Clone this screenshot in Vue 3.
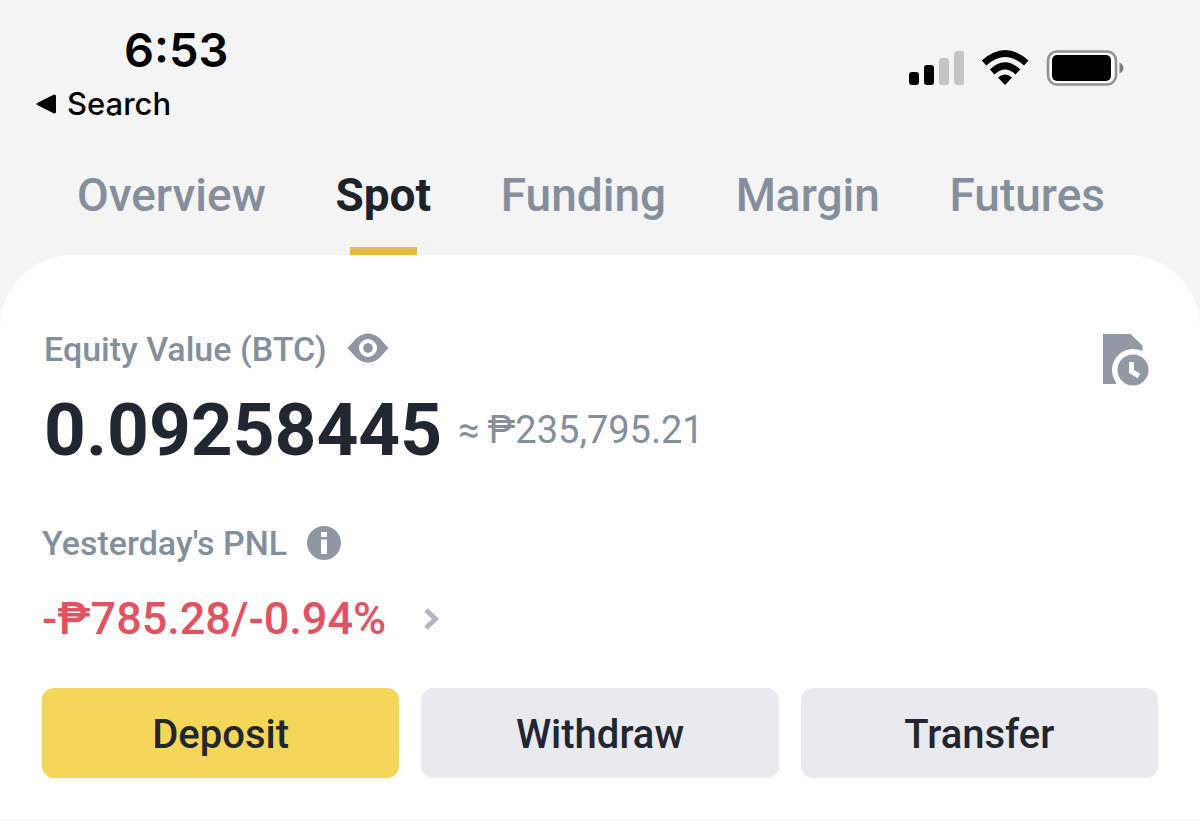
<script setup>
import { ref } from 'vue'

const tabs = ['Overview', 'Spot', 'Funding', 'Margin', 'Futures']
const active = ref('Spot')
const actions = ['Deposit', 'Withdraw', 'Transfer']
</script>

<template>
  <div class="wallet">
    <header class="status">
      <div class="status-left">
        <div class="time">6:53</div>
        <a class="back" href="#">
          <svg width="20" height="20" viewBox="0 0 20 20" aria-hidden="true">
            <path d="M1.2 9 17.5.8Q20 0 20 2.5v15q0 2.500-2.500 1.700L1.200 11Q-.4 10 1.200 9z" fill="#000" />
          </svg>
          <span>Search</span>
        </a>
      </div>
      <div class="indicators">
        <svg width="56" height="36" viewBox="0 0 56 36" role="img" aria-label="Signal">
          <rect x="1" y="22" width="10" height="13" rx="3" />
          <rect x="16" y="15" width="10" height="20" rx="3" />
          <rect x="31" y="8" width="10" height="27" rx="3" fill="#c4c4c4" />
          <rect x="46" y="1" width="10" height="34" rx="3" fill="#c4c4c4" />
        </svg>
        <svg width="48" height="36" viewBox="0 0 48 36" role="img" aria-label="Wi-Fi">
          <path d="M.800 10.500Q24-10.500 47.500 10.500L43 15.500Q24-1.500 5.300 15.500z" />
          <path d="M8.800 19.500Q24 5 39.200 19.500L34.500 24.500Q24 14.500 13.500 24.500z" />
          <path d="M17 27.500Q24 21.500 31 27.500L24 35z" />
        </svg>
        <svg width="78" height="36" viewBox="0 0 78 36" role="img" aria-label="Battery">
          <rect x="2" y="1.500" width="68" height="33" rx="9" fill="#fbfbfb" stroke="#919191" stroke-width="2.600" />
          <rect x="6" y="5" width="59" height="26" rx="5" />
          <path d="M73.500 12.500q4 2 4 5.500t-4 5.500z" fill="#7d7d7d" />
        </svg>
      </div>
    </header>

    <nav class="tabs">
      <button
        v-for="tab in tabs"
        :key="tab"
        class="tab"
        :class="{ active: tab === active }"
        @click="active = tab"
      >{{ tab }}</button>
    </nav>

    <main class="panel">
      <div class="top">
        <section>
          <div class="label">
            <span>Equity Value (BTC)</span>
            <button class="icon" aria-label="Hide balance">
              <svg width="42" height="32" viewBox="0 0 42 32">
                <path fill-rule="evenodd" fill="#9097a3" d="M.500 15 9.500 5Q21-4 32.500 5L41.500 15 32.500 25Q21 34 9.500 25zM21 6a9 9 0 1 0 0 18 9 9 0 0 0 0-18z" />
                <circle cx="21" cy="15" r="4.800" fill="#9097a3" />
              </svg>
            </button>
          </div>
          <div class="balance">
            <strong>0.09258445</strong>
            <span class="fiat"><span class="approx">≈</span>₱235,795.21</span>
          </div>
        </section>
        <button class="icon" aria-label="Order history">
          <svg width="48" height="54" viewBox="0 0 48 54">
            <path d="M1 1H28.500L40.500 12.500V32H14V51H1z" fill="#9199a5" />
            <circle cx="31" cy="37" r="21" fill="#fefefe" />
            <circle cx="31" cy="37" r="15.500" fill="#9199a5" />
            <path d="M29.500 29V38.500L37 43" fill="none" stroke="#fefefe" stroke-width="5" />
          </svg>
        </button>
      </div>

      <section class="pnl">
        <div class="label">
          <span>Yesterday's PNL</span>
          <button class="icon" aria-label="About PNL">
            <svg width="34" height="34" viewBox="0 0 34 34">
              <circle cx="17" cy="17" r="17" fill="#9097a3" />
              <path d="M14 6h6v5h-6zM14 13.500h6V28h-6z" fill="#fefefe" />
            </svg>
          </button>
        </div>
        <a class="change" href="#">
          <span>-₱785.28/-0.94%</span>
          <svg width="16" height="22" viewBox="0 0 16 22" aria-hidden="true">
            <path d="M2 2 11.500 11 2 20" fill="none" stroke="#b3b6bd" stroke-width="5" />
          </svg>
        </a>
      </section>

      <div class="actions">
        <button
          v-for="(action, i) in actions"
          :key="action"
          class="action"
          :class="{ primary: i === 0 }"
        >{{ action }}</button>
      </div>
    </main>
  </div>
</template>

<style>
body {
  margin: 0;
  background: #fefefe;
}
</style>

<style scoped>
.wallet {
  background: #f4f4f4;
  font-family: Roboto, "Liberation Sans", sans-serif;
  color: #222630;
}
button {
  padding: 0;
  border: 0;
  background: none;
  font: inherit;
  color: inherit;
  cursor: pointer;
}
a {
  color: inherit;
  text-decoration: none;
}
svg {
  display: block;
  flex: none;
}
.status {
  display: flex;
  justify-content: space-between;
  align-items: flex-start;
  padding: 24px 76px 0 36px;
  font-family: Inter, sans-serif;
  color: #000;
}
.time {
  padding-left: 88px;
  font-size: 47px;
  font-weight: 600;
  line-height: 52px;
}
.back {
  display: flex;
  align-items: center;
  gap: 11px;
  margin-top: 10px;
  font-size: 31px;
  font-weight: 500;
  line-height: 36px;
}
.indicators {
  display: flex;
  gap: 17px;
  padding-top: 26px;
}
.tabs {
  display: flex;
  justify-content: space-between;
  padding: 14px 95px 0 77px;
}
.tab {
  display: flex;
  flex-direction: column;
  align-items: center;
  justify-content: space-between;
  height: 119px;
  padding-top: 32px;
  box-sizing: border-box;
  font-size: 46px;
  font-weight: 500;
  line-height: 54px;
  color: #848e9c;
}
.tab::after {
  content: "";
  width: 67px;
  height: 8px;
}
.tab.active {
  font-weight: 700;
  color: #1e2329;
}
.tab.active::after {
  background: #e6b93f;
}
.panel {
  padding: 74px 42px 42px;
  border-bottom: 1px solid #f4f4f4;
  border-radius: 72px 72px 0 0;
  background: #fefefe;
}
.top {
  display: flex;
  justify-content: space-between;
  align-items: flex-start;
  padding: 0 8px 0 2px;
}
.top > .icon {
  padding-top: 4px;
}
.label {
  display: flex;
  align-items: center;
  gap: 20px;
  font-size: 34px;
  font-weight: 500;
  line-height: 40px;
  color: #848e9c;
}
.balance {
  display: flex;
  align-items: center;
  gap: 16px;
  margin-top: 18px;
}
.balance strong {
  font-size: 73px;
  font-weight: 700;
  line-height: 86px;
}
.fiat {
  display: flex;
  gap: 8px;
  font-size: 38px;
  line-height: 86px;
  color: #848e9c;
}
.pnl {
  margin-top: 50px;
}
.change {
  display: flex;
  align-items: center;
  gap: 38px;
  margin-top: 28px;
  font-size: 45px;
  font-weight: 500;
  line-height: 56px;
  color: #e15361;
}
.actions {
  display: grid;
  grid-template-columns: repeat(3, 1fr);
  gap: 22px;
  margin-top: 41px;
}
.action {
  height: 90px;
  padding-top: 2px;
  border-radius: 12px;
  background: #e9eaed;
  font-size: 40px;
  font-weight: 500;
}
.action.primary {
  background: #f4d658;
}
</style>
